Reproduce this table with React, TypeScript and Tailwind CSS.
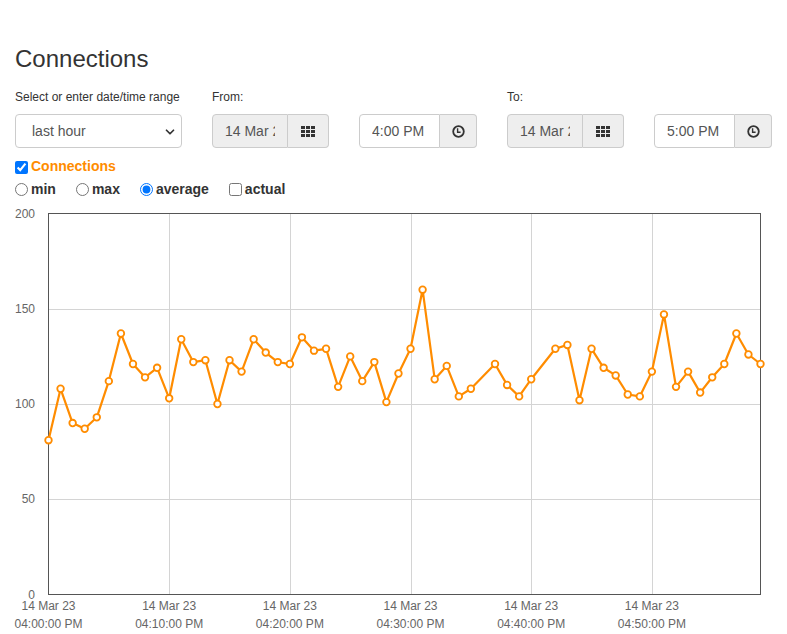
import { ChevronDown } from "lucide-react";

const values: (number | null)[] = [
  81, 108, 90, 87, 93, 112, 137, 121, 114, 119, 103, 134, 122, 123, 100, 123, 117, 134, 127, 122, 121,
  135, 128, 129, 109, 125, 112, 122, 101, 116, 129, 160, 113, 120, 104, 108,
  null,
  121, 110, 104, 113,
  null,
  129, 131, 102, 129, 119, 115, 105, 104, 117, 147, 109, 117, 106, 114, 121, 137, 126, 121,
];

const LEFT = 48.5;
const RIGHT = 760.5;
const TOP = 213.5;
const BOTTOM = 594.5;

const xAt = (i: number) => LEFT + (i * (RIGHT - LEFT)) / 59;
const yAt = (v: number) => BOTTOM - (v * (BOTTOM - TOP)) / 200;

const GridIcon = () => (
  <svg width="14" height="11" viewBox="0 0 14 11" fill="#333">
    {[0, 5, 10].map((x) =>
      [0, 4, 8].map((y) => <rect key={`${x}-${y}`} x={x} y={y} width="4" height="3" />)
    )}
  </svg>
);

const ClockIcon = () => (
  <svg width="13" height="13" viewBox="0 0 13 13" fill="none" stroke="#333" strokeWidth="1.8">
    <circle cx="6.5" cy="6.5" r="5.3" />
    <path d="M5.6 3.2 V7.2 H8.6" strokeWidth="1.4" />
  </svg>
);

const DateGroup = () => (
  <div className="flex h-[34px]">
    <input
      readOnly
      value="14 Mar 2023 04:00 PM"
      className="w-[76px] h-full border border-[#ccc] rounded-l-[4px] bg-[#eee] px-[12px] text-[14px] text-[#555] outline-none"
    />
    <span className="w-[41px] h-full border border-l-0 border-[#ccc] rounded-r-[4px] bg-[#eee] flex items-center justify-center">
      <GridIcon />
    </span>
  </div>
);

const TimeGroup = ({ time }: { time: string }) => (
  <div className="flex h-[34px]">
    <input
      readOnly
      value={time}
      className="w-[81px] h-full border border-[#ccc] rounded-l-[4px] bg-white px-[12px] text-[14px] text-[#555] outline-none"
    />
    <span className="w-[37px] h-full border border-l-0 border-[#ccc] rounded-r-[4px] bg-[#eee] flex items-center justify-center">
      <ClockIcon />
    </span>
  </div>
);

const Chart = () => {
  const pts = values
    .map((v, i) => (v === null ? null : [xAt(i), yAt(v)]))
    .filter((p): p is number[] => p !== null);
  const line = pts.map((p, i) => `${i === 0 ? "M" : "L"}${p[0].toFixed(1)} ${p[1].toFixed(1)}`).join(" ");
  const ticks = [0, 10, 20, 30, 40, 50];
  return (
    <svg width="787" height="431" viewBox="0 203 787 431" className="block -ml-[15px]">
      {[50, 100, 150].map((v) => (
        <line key={v} x1={LEFT} x2={RIGHT} y1={Math.round(yAt(v)) + 0.5} y2={Math.round(yAt(v)) + 0.5} stroke="#d4d4d4" />
      ))}
      {ticks.slice(1).map((m) => (
        <line key={m} x1={Math.round(xAt(m)) + 0.5} x2={Math.round(xAt(m)) + 0.5} y1={TOP} y2={BOTTOM} stroke="#d4d4d4" />
      ))}
      <rect x={LEFT} y={TOP} width={RIGHT - LEFT} height={BOTTOM - TOP} fill="none" stroke="#555" />
      {[0, 50, 100, 150, 200].map((v) => (
        <text key={v} x="35" y={yAt(v) + 4} textAnchor="end" fontSize="12" fill="#666">
          {v}
        </text>
      ))}
      {ticks.map((m) => (
        <g key={m} fontSize="12" fill="#666" textAnchor="middle">
          <text x={xAt(m)} y="610">14 Mar 23</text>
          <text x={xAt(m)} y="628">{`04:${m === 0 ? "00" : m}:00 PM`}</text>
        </g>
      ))}
      <path d={line} fill="none" stroke="#ff8c00" strokeWidth="2.2" strokeLinejoin="round" />
      {pts.map((p, i) => (
        <circle key={i} cx={p[0]} cy={p[1]} r="3.3" fill="white" stroke="#ff8c00" strokeWidth="1.8" />
      ))}
    </svg>
  );
};

export default function App() {
  return (
    <div className="min-h-screen bg-white px-[15px] pt-[46px] text-[#333]" style={{ fontFamily: '"Liberation Sans", Arial, sans-serif' }}>
      <h3 className="text-[24px] leading-[26px] font-normal">Connections</h3>

      <div className="flex gap-[30px] mt-[18px]">
        <div className="w-[167px]">
          <div className="text-[12px] leading-[14px] mb-[10px]">Select or enter date/time range</div>
          <div className="relative h-[34px] w-[167px] border border-[#ccc] rounded-[4px] bg-white flex items-center pl-[16px] text-[14px] text-[#555]">
            last hour
            <ChevronDown size={14} strokeWidth={3} className="absolute right-[4px] top-[10px] text-[#333]" />
          </div>
        </div>
        <div>
          <div className="text-[12px] leading-[14px] mb-[10px]">From:</div>
          <div className="flex gap-[30px]">
            <DateGroup />
            <TimeGroup time="4:00 PM" />
          </div>
        </div>
        <div>
          <div className="text-[12px] leading-[14px] mb-[10px]">To:</div>
          <div className="flex gap-[30px]">
            <DateGroup />
            <TimeGroup time="5:00 PM" />
          </div>
        </div>
      </div>

      <label className="flex items-center mt-[10px] h-[17px] text-[14px] font-bold text-[#ff8c00]">
        <input type="checkbox" defaultChecked className="m-0 mr-[3px] w-[13px] h-[13px] mt-[2px]" />
        Connections
      </label>

      <div className="flex items-center gap-[20px] mt-[6px] h-[17px] text-[14px] font-bold">
        <label className="flex items-center">
          <input type="radio" name="agg" className="m-0 mr-[3px] w-[13px] h-[13px]" />
          min
        </label>
        <label className="flex items-center">
          <input type="radio" name="agg" className="m-0 mr-[3px] w-[13px] h-[13px]" />
          max
        </label>
        <label className="flex items-center">
          <input type="radio" name="agg" defaultChecked className="m-0 mr-[3px] w-[13px] h-[13px]" />
          average
        </label>
        <label className="flex items-center">
          <input type="checkbox" className="m-0 mr-[3px] w-[13px] h-[13px]" />
          actual
        </label>
      </div>

      <div className="mt-[5px]">
        <Chart />
      </div>
    </div>
  );
}
